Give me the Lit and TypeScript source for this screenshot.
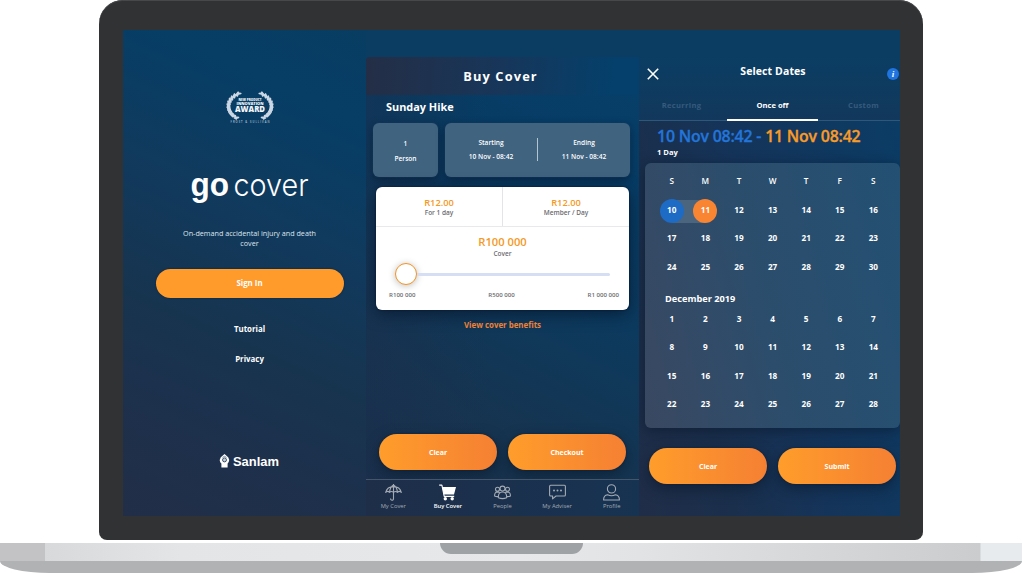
import { LitElement, html, css, svg } from "lit";
import { customElement } from "lit/decorators.js";

const leaf = (deg: number, tilt: number) => {
  const a = (deg * Math.PI) / 180;
  const x = 26 + 19.5 * Math.cos(a);
  const y = 14.2 + 14.3 * Math.sin(a);
  return svg`<ellipse cx=${x} cy=${y} rx="2.9" ry="1.15" transform="rotate(${deg + tilt} ${x} ${y})"></ellipse>`;
};
const leafAngles = [-58, -46, -35, -24, -13, -2, 9, 20, 31, 42, 54];
const branch = svg`${leafAngles.map((d) => leaf(d, -45))}${leafAngles.map((d) => leaf(d - 4, -118))}`;

@customElement("award-badge")
export class AwardBadge extends LitElement {
  static styles = css`
    :host { display: block; width: 48px; height: 33px; }
    svg { display: block; overflow: visible; }
    text { font-family: "Open Sans", sans-serif; font-weight: 800; fill: #f2f5fa; text-anchor: middle; }
    .tiny { font-size: 3.1px; }
    .mid { font-size: 4px; }
    .big { font-size: 8px; }
    .foot { font-size: 2.6px; font-weight: 600; fill: #b4c6d8; }
  `;
  render() {
    return html`<svg width="48" height="33" viewBox="0 0 48 33">
      <g fill="#cbd7e4">${branch}</g>
      <g fill="#cbd7e4" transform="translate(48 0) scale(-1 1)">${branch}</g>
      <text class="tiny" x="24" y="9" textLength="23" lengthAdjust="spacingAndGlyphs">NEW PRODUCT</text>
      <text class="mid" x="24" y="13" textLength="27" lengthAdjust="spacingAndGlyphs">INNOVATION</text>
      <text class="big" x="24" y="20.2" textLength="30" lengthAdjust="spacingAndGlyphs">AWARD</text>
      <text class="foot" x="24" y="30.8" textLength="39">FROST &amp; SULLIVAN</text>
    </svg>`;
  }
}

@customElement("welcome-panel")
export class WelcomePanel extends LitElement {
  static styles = css`
    :host {
      display: flex; flex-direction: column; align-items: center; box-sizing: border-box;
      width: 243px; height: 486px; padding: 62px 0 0 10px; color: #fff;
      background: linear-gradient(205deg, #093d62 0%, #063e66 16%, #103a5e 38%, #17344f 62%, #1d304c 80%, #222e47 100%);
    }
    .logo { display: block; margin-top: 46px; overflow: visible; }
    .go { font: 700 33px "Liberation Sans", sans-serif; fill: #fff; }
    .cover { font: 300 31px Inter, "Liberation Sans", sans-serif; fill: #fff; }
    .intro { margin: 23px 0 0; width: 150px; text-align: center; font-size: 7.2px; line-height: 10px; color: #dfe7ef; }
    .signin {
      margin: 21px 0 0; width: 188px; height: 29px; border: 0; padding: 0; border-radius: 15px; background: #ff9b2b;
      color: #fff; font: 700 7.9px/29px "Open Sans", sans-serif; box-shadow: 0 0 2px #0b2340;
    }
    .link { margin-top: 24px; font-size: 7.9px; line-height: 14px; font-weight: 700; }
    .link + .link { margin-top: 16px; }
    .brand { display: flex; align-items: center; gap: 3px; margin-top: 86px; height: 18px; }
    .word { font: 700 13.4px "Liberation Sans", sans-serif; fill: #fff; }
  `;
  render() {
    return html`
      <award-badge></award-badge>
      <svg class="logo" width="118" height="34" viewBox="0 0 118 34">
        <text class="go" x="-.5" y="25" textLength="38.5" lengthAdjust="spacingAndGlyphs">go</text>
        <text class="cover" x="42.5" y="25" textLength="75" lengthAdjust="spacingAndGlyphs">cover</text>
      </svg>
      <p class="intro">On-demand accidental injury and death cover</p>
      <button class="signin">Sign In</button>
      <span class="link">Tutorial</span>
      <span class="link">Privacy</span>
      <div class="brand">
        <svg width="11" height="14" viewBox="0 0 11 14">
          <path fill="#fff" d="M5.5 0 L9.2 3.3 Q11 6 9.6 8.2 L8.6 9.6 V13.6 H2.4 V9.6 L1.2 8.2 Q0 6 1.8 3.3 Z"></path>
          <circle cx="5.5" cy="5.9" r="2" fill="#c3ccd6" stroke="#1c314c" stroke-width=".8"></circle>
          <path d="M3.4 3.4 Q5.5 1.2 7.6 3.4" fill="none" stroke="#1c314c" stroke-width=".5"></path>
        </svg>
        <svg width="47" height="18" viewBox="0 0 47 18">
          <text class="word" x="0" y="14" textLength="46" lengthAdjust="spacingAndGlyphs">Sanlam</text>
        </svg>
      </div>
    `;
  }
}

@customElement("pill-pair")
export class PillPair extends LitElement {
  static properties = { primary: {} };
  primary = "";
  static styles = css`
    :host { display: flex; gap: 11px; }
    button {
      width: 118px; height: 36px; padding: 0; border: 0; border-radius: 18px; color: #fff;
      background: linear-gradient(90deg, #ff9d2b, #f58033);
      font: 700 7px/35px "Open Sans", sans-serif;
      box-shadow: 0 0 2px #12223c, 0 5px 14px rgba(8, 20, 36, .5);
    }
  `;
  render() {
    return html`<button>Clear</button><button>${this.primary}</button>`;
  }
}

const icons = {
  umbrella: svg`<path d="M.7 8.4 A8 7.4 0 0 1 16.3 8.4 Q14.5 6.4 12.4 8.4 Q10.5 6.6 8.5 8.4 Q6.5 6.6 4.6 8.4 Q2.5 6.4 .7 8.4 Z M4.6 8.2 Q5 3 8.5 1 Q12 3 12.4 8.2 M8.5 0 V14.6 Q8.4 16.4 6.8 16.3 Q5.5 16.1 5.5 14.6"></path>`,
  cart: svg`<path d="M.2 1.1 H2.9 L5.2 12.4 H15.2"></path><path fill="currentColor" stroke="none" d="M3.2 3 H17 L15 10.6 H4.8 Z"></path><circle cx="6.3" cy="14.8" r="1.7" fill="currentColor" stroke="none"></circle><circle cx="13.2" cy="14.8" r="1.7" fill="currentColor" stroke="none"></circle>`,
  people: svg`<circle cx="8.5" cy="4.6" r="2.5"></circle><circle cx="3.5" cy="5.3" r="2"></circle><circle cx="13.5" cy="5.3" r="2"></circle><path d="M4.4 13.8 Q4 8 8.5 8 Q13 8 12.6 13.8 Q8.5 15.4 4.4 13.8 Z M4.2 12.6 Q2 12.8 .6 12 Q.4 8 3.6 7.9 Q4.8 7.9 5.5 8.7 M12.8 12.6 Q15 12.8 16.4 12 Q16.6 8 13.4 7.9 Q12.2 7.9 11.5 8.7"></path>`,
  chat: svg`<path d="M1.6 1.2 H15.4 Q16.4 1.2 16.4 2.2 V11 Q16.4 12 15.4 12 H7 L3.6 14.8 V12 H1.6 Q.6 12 .6 11 V2.2 Q.6 1.2 1.6 1.2 Z"></path><g fill="currentColor" stroke="none"><circle cx="5" cy="6.6" r="1"></circle><circle cx="8.5" cy="6.6" r="1"></circle><circle cx="12" cy="6.6" r="1"></circle></g>`,
  profile: svg`<circle cx="8.5" cy="4.9" r="4.1"></circle><path d="M.6 16 Q.5 11.4 4.6 10.8 Q8.5 12.8 12.4 10.8 Q16.5 11.4 16.4 16 Z"></path>`,
};

@customElement("buy-panel")
export class BuyPanel extends LitElement {
  static styles = css`
    :host {
      display: flex; flex-direction: column; width: 273px; height: 459px; color: #fff; border-radius: 4px 0 0 0; overflow: hidden;
      background:
        linear-gradient(90deg, rgba(26, 46, 76, .45) 0%, rgba(26, 46, 76, 0) 45%),
        linear-gradient(208deg, #06406b 0%, #073c64 24%, #0c3a5e 46%, #163450 74%, #1b304b 100%);
    }
    .head {
      height: 38px; text-align: center; font-size: 12.8px; line-height: 38px; font-weight: 700; letter-spacing: 1.15px;
      box-sizing: border-box; padding-right: 4px; background: linear-gradient(95deg, #242e46 0%, #17365a 50%, #04406b 90%);
    }
    .title { margin: 5px 0 0 20px; font-size: 10.9px; line-height: 14px; font-weight: 700; }
    .facts { display: flex; gap: 7px; margin: 9px 9px 0 7px; height: 54px; }
    .fact {
      display: flex; border-radius: 6px; background: #406380; font-size: 6.6px; line-height: 14px; font-weight: 600; text-align: center;
      box-shadow: 0 0 2px #1c3f60, 0 3px 9px rgba(7, 24, 46, .6); box-sizing: border-box; padding-top: 13px;
    }
    .people { width: 65px; }
    .people .cell { line-height: 15px; }
    .dates { flex: 1; }
    .cell { flex: 1; }
    .bar { width: 1px; height: 23px; margin-top: 2px; background: #b4c4d0; }
    .card {
      margin: 10px 10px 0 10px; height: 123px; border-radius: 6px; background: #fff; color: #6b6b70;
      box-shadow: 0 0 2px #061430, 0 4px 16px rgba(5, 20, 42, .7);
    }
    .prices { display: flex; height: 39px; border-bottom: 1.6px solid #e9e9eb; }
    .price { flex: 1; text-align: center; padding-top: 10px; }
    .price + .price { border-left: 1px solid #e4e4e6; }
    .money { font-size: 9.3px; line-height: 12px; font-weight: 600; color: #f5991f; }
    .note { font-size: 6.5px; line-height: 8px; font-weight: 600; }
    .total { padding-top: 7px; text-align: center; }
    .total .money { font-size: 11.2px; line-height: 15px; }
    .total .note { padding-top: 1px; }
    .slider { display: flex; align-items: center; height: 22px; margin: 5.4px 19px 0 19px; }
    .thumb { box-sizing: border-box; width: 22px; height: 22px; border: 1.8px solid #f79321; border-radius: 50%; background: #fff; box-shadow: 0 1px 7px rgba(0, 0, 0, .25); }
    .track { flex: 1; height: 2.6px; border-radius: 0 2px 2px 0; background: #d5def2; }
    .scale { display: flex; justify-content: space-between; margin: 5.6px 10px 0 13px; font-size: 6.1px; line-height: 8px; font-weight: 600; }
    .more { margin-top: 8px; text-align: center; font-size: 7.9px; line-height: 14px; font-weight: 700; color: #ee8136; }
    .actions { margin: 102px 0 0 13px; }
    .tabs { display: flex; margin-top: 9px; height: 36px; border-top: 1.6px solid #45566b; background: linear-gradient(90deg, #1e2e49, #173352); }
    .tab { flex: 1; display: flex; flex-direction: column; align-items: center; padding-top: 4px; font-size: 5.8px; line-height: 8px; color: #a4aab3; }
    .tab.on { color: #fff; font-weight: 600; }
    .tab svg { display: block; margin-bottom: 1px; fill: none; stroke: currentColor; stroke-width: 1.1; stroke-linejoin: round; }
  `;
  render() {
    const tabs: [keyof typeof icons, string][] = [
      ["umbrella", "My Cover"], ["cart", "Buy Cover"], ["people", "People"], ["chat", "My Adviser"], ["profile", "Profile"],
    ];
    return html`
      <div class="head">Buy Cover</div>
      <div class="title">Sunday Hike</div>
      <div class="facts">
        <div class="fact people"><div class="cell">1<br />Person</div></div>
        <div class="fact dates">
          <div class="cell">Starting<br />10 Nov - 08:42</div>
          <div class="bar"></div>
          <div class="cell">Ending<br />11 Nov - 08:42</div>
        </div>
      </div>
      <div class="card">
        <div class="prices">
          <div class="price"><div class="money">R12.00</div><div class="note">For 1 day</div></div>
          <div class="price"><div class="money">R12.00</div><div class="note">Member / Day</div></div>
        </div>
        <div class="total"><div class="money">R100 000</div><div class="note">Cover</div></div>
        <div class="slider"><div class="thumb"></div><div class="track"></div></div>
        <div class="scale"><span>R100 000</span><span>R500 000</span><span>R1 000 000</span></div>
      </div>
      <div class="more">View cover benefits</div>
      <pill-pair class="actions" primary="Checkout"></pill-pair>
      <div class="tabs">
        ${tabs.map(([icon, label], i) => html`
          <div class="tab ${i === 1 ? "on" : ""}">
            <svg width="17" height="17" viewBox="0 0 17 17">${icons[icon]}</svg>${label}
          </div>`)}
      </div>
    `;
  }
}

@customElement("dates-panel")
export class DatesPanel extends LitElement {
  static styles = css`
    :host {
      display: flex; flex-direction: column; width: 261px; height: 459px; color: #fff; overflow: hidden;
      background: linear-gradient(75deg, #202d48 0%, #1a2f4c 25%, #15345a 50%, #0a3d66 100%);
    }
    .top { height: 64px; box-sizing: border-box; border-bottom: 1px solid #2d5879; background: linear-gradient(180deg, #0b3d63, #12385c); }
    .bar { display: flex; align-items: center; justify-content: space-between; height: 30px; padding: 2px 1px 0 8px; box-sizing: border-box; }
    .bar svg { display: block; margin-top: 2px; }
    .name { font-size: 10.5px; line-height: 14px; font-weight: 700; letter-spacing: .1px; margin: -4px 0 0 0; }
    .i { font: italic 700 9px "Liberation Serif", serif; fill: #fff; text-anchor: middle; }
    .tabs { display: flex; width: 273px; margin-left: -3px; height: 34px; box-sizing: border-box; }
    .tab { flex: 1; text-align: center; font-size: 7.6px; line-height: 36px; font-weight: 700; color: #365b7c; letter-spacing: .3px; box-sizing: border-box; height: 34px; }
    .tab.on { color: #fff; border-bottom: 2px solid #fff; letter-spacing: 0; }
    .range { margin: 5px 0 0 18px; font-size: 15.9px; line-height: 20px; letter-spacing: -.2px; font-weight: 600; color: #f99b27; white-space: nowrap; -webkit-text-stroke: .3px currentColor; }
    .from { color: #2375da; }
    .days { margin-left: 18px; font-size: 7.6px; line-height: 12px; font-weight: 700; }
    .cal {
      box-sizing: border-box; width: 255px; height: 265px; margin: 5px 0 0 6px; padding: 4px 10px 0; border-radius: 6px;
      background: linear-gradient(75deg, #3a4861 0%, #2c4d6c 45%, #235073 100%); box-shadow: 0 3px 14px rgba(8, 20, 38, .55);
    }
    .grid { display: grid; grid-template-columns: repeat(7, 33.6px); grid-auto-rows: 28.5px; text-align: center; font-size: 8.2px; line-height: 28px; font-weight: 700; }
    .wd { font-weight: 600; }
    .sel { display: flex; align-items: center; justify-content: center; }
    .dot { width: 24px; height: 24px; margin-top: 3px; border-radius: 50%; line-height: 21px; background: #1d6bc4; }
    .first { background: linear-gradient(90deg, transparent 50%, #4b657e 50%) 0 4px / 100% 23px no-repeat; }
    .last { background: linear-gradient(90deg, #4b657e 50%, transparent 50%) 0 4px / 100% 23px no-repeat; }
    .last .dot { background: #f98432; }
    .month { margin: 11px 0 0 10px; font-size: 9.2px; line-height: 14px; font-weight: 700; }
    .december { margin-top: -1.5px; }
    .actions { margin: 20px 0 0 10px; }
  `;
  render() {
    const range = (from: number, to: number) => Array.from({ length: to - from + 1 }, (_, k) => from + k);
    return html`
      <div class="top">
        <div class="bar">
          <svg width="12" height="12" viewBox="0 0 12 12"><path d="M.8 .8 L11.2 11.2 M11.2 .8 L.8 11.2" stroke="#fff" stroke-width="1.6"></path></svg>
          <span class="name">Select Dates</span>
          <svg width="12" height="12" viewBox="0 0 12 12"><circle cx="6" cy="6" r="6" fill="#1f74e0"></circle><text class="i" x="6" y="9">i</text></svg>
        </div>
        <div class="tabs"><div class="tab">Recurring</div><div class="tab on">Once off</div><div class="tab">Custom</div></div>
      </div>
      <div class="range"><span class="from">10 Nov 08:42 -</span> 11 Nov 08:42</div>
      <div class="days">1 Day</div>
      <div class="cal">
        <div class="grid">
          ${[..."SMTWTFS"].map((d) => html`<div class="wd">${d}</div>`)}
          <div class="sel first"><div class="dot">10</div></div>
          <div class="sel last"><div class="dot">11</div></div>
          ${range(12, 30).map((d) => html`<div>${d}</div>`)}
        </div>
        <div class="month">December 2019</div>
        <div class="grid december">${range(1, 28).map((d) => html`<div>${d}</div>`)}</div>
      </div>
      <pill-pair class="actions" primary="Submit"></pill-pair>
    `;
  }
}

@customElement("app-root")
export class AppRoot extends LitElement {
  static styles = css`
    :host { display: block; width: 1023px; height: 573px; overflow: hidden; background: #fff; font-family: "Open Sans", sans-serif; }
    .lid {
      display: flex; box-sizing: border-box; width: 824px; height: 540px; margin: 0 0 3px 99px; padding: 30px 23px 24px 24px;
      border-radius: 24px 24px 8px 8px; background: #313234; box-shadow: inset 0 1px 0 #46484a;
    }
    .screen { display: flex; align-items: flex-end; width: 777px; height: 486px; background: #0b3d62; overflow: hidden; }
    .deck {
      display: flex; justify-content: center; width: 1022px; height: 18px;
      background: linear-gradient(90deg, #c3c3c5 45px, #d8d9da 45px, #e4e5e6 180px, #e7e8ea 520px, #e2e3e4 640px, #cbccce 980px, #e8ebee 981px);
    }
    .notch { width: 143px; height: 11px; border-radius: 0 0 11px 11px; background: #9fa2a5; }
    .foot { width: 1022px; height: 12px; border-radius: 0 0 50px 50px / 0 0 12px 12px; background: #b1b2b4; }
  `;
  render() {
    return html`
      <div class="lid">
        <div class="screen">
          <welcome-panel></welcome-panel>
          <buy-panel></buy-panel>
          <dates-panel></dates-panel>
        </div>
      </div>
      <div class="deck"><div class="notch"></div></div>
      <div class="foot"></div>
    `;
  }
}
